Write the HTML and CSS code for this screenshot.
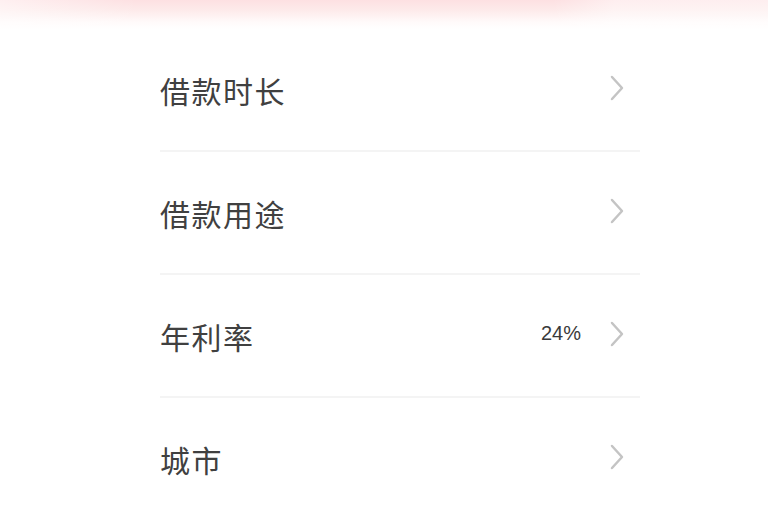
FILE: index.html
```html
<!DOCTYPE html>
<html lang="zh-CN">
<head>
<meta charset="utf-8">
<link rel="stylesheet" href="styles.css">
</head>
<body>
<div class="banner-edge"></div>
<ul class="list">
  <li class="row"><span class="label">借款时长</span><span class="right"><svg class="chev" viewBox="0 0 16 28"><polyline points="3,3 13,14 3,25"/></svg></span></li>
  <li class="row"><span class="label">借款用途</span><span class="right"><svg class="chev" viewBox="0 0 16 28"><polyline points="3,3 13,14 3,25"/></svg></span></li>
  <li class="row"><span class="label">年利率</span><span class="right"><span class="value">24%</span><svg class="chev" viewBox="0 0 16 28"><polyline points="3,3 13,14 3,25"/></svg></span></li>
  <li class="row"><span class="label">城市</span><span class="right"><svg class="chev" viewBox="0 0 16 28"><polyline points="3,3 13,14 3,25"/></svg></span></li>
</ul>
</body>
</html>
```

FILE: styles.css
```css
html, body {
  margin: 0;
  padding: 0;
  background: #fff;
  overflow: hidden;
}
body {
  font-family: "Noto Sans CJK SC", "Noto Sans", sans-serif;
  color: #3a3a3a;
}
.banner-edge {
  height: 29px;
  background:
    linear-gradient(to right, rgba(255,255,255,0.5) 0%, rgba(255,255,255,0) 18%, rgba(255,255,255,0) 72%, rgba(255,255,255,0.45) 80%),
    linear-gradient(to bottom, #fde0e2 0px, #fdeaea 10px, #fffafa 22px, #ffffff 29px);
}
.list {
  list-style: none;
  margin: 0;
  padding: 0 128px 0 160px;
}
.row {
  height: 121px;
  display: flex;
  align-items: center;
  justify-content: space-between;
  border-bottom: 2px solid #f4f4f4;
}
.label {
  font-size: 30px;
  letter-spacing: 1.5px;
  color: #404040;
}
.right {
  display: flex;
  align-items: center;
  padding-right: 15px;
  margin-top: -4px;
}
.value {
  font-size: 20px;
  color: #3a3a3a;
  margin-right: 28px;
  font-family: "Liberation Sans", "Noto Sans", sans-serif;
}
.chev {
  width: 16px;
  height: 28px;
  fill: none;
  stroke: #c4c4c4;
  stroke-width: 2.5;
  stroke-linecap: round;
  stroke-linejoin: round;
}
```
